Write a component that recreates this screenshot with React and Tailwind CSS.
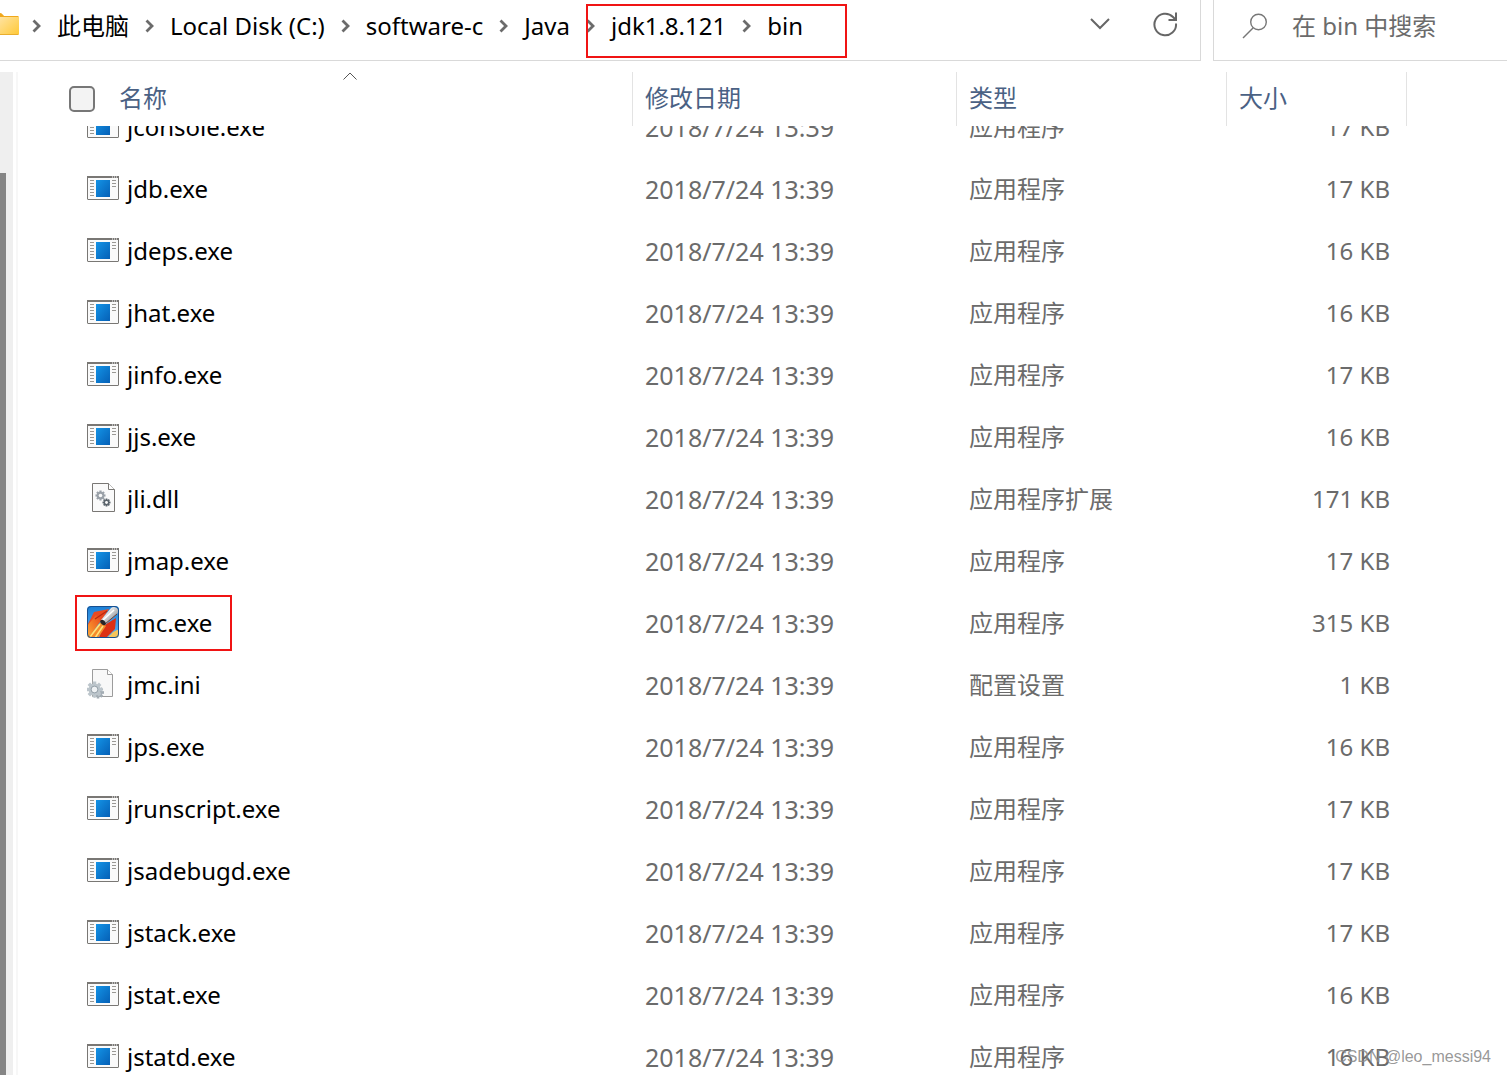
import { useEffect, useRef, useState } from "react";

const files = [
  { name: "jconsole.exe", kind: "exe", size: "17 KB" },
  { name: "jdb.exe", kind: "exe", size: "17 KB" },
  { name: "jdeps.exe", kind: "exe", size: "16 KB" },
  { name: "jhat.exe", kind: "exe", size: "16 KB" },
  { name: "jinfo.exe", kind: "exe", size: "17 KB" },
  { name: "jjs.exe", kind: "exe", size: "16 KB" },
  { name: "jli.dll", kind: "dll", size: "171 KB" },
  { name: "jmap.exe", kind: "exe", size: "17 KB" },
  { name: "jmc.exe", kind: "jmc", size: "315 KB", marked: true },
  { name: "jmc.ini", kind: "ini", size: "1 KB" },
  { name: "jps.exe", kind: "exe", size: "16 KB" },
  { name: "jrunscript.exe", kind: "exe", size: "17 KB" },
  { name: "jsadebugd.exe", kind: "exe", size: "17 KB" },
  { name: "jstack.exe", kind: "exe", size: "17 KB" },
  { name: "jstat.exe", kind: "exe", size: "16 KB" },
  { name: "jstatd.exe", kind: "exe", size: "16 KB" },
];

const kinds = {
  exe: { label: "应用程序", Icon: ExeIcon },
  jmc: { label: "应用程序", Icon: JmcIcon },
  dll: { label: "应用程序扩展", Icon: DllIcon },
  ini: { label: "配置设置", Icon: IniIcon },
};

const crumbs = ["此电脑", "Local Disk (C:)", "software-c", "Java"];
const markedCrumbs = ["jdk1.8.121", "bin"];

function ExeIcon() {
  return (
    <svg viewBox="0 0 32 32" className="mb-0.5 size-8 shrink-0" aria-hidden="true">
      <defs>
        <linearGradient id="exe-blue" x1="0" y1="0" x2="1" y2="1">
          <stop offset="0" stopColor="#1493e6" />
          <stop offset="1" stopColor="#0560b6" />
        </linearGradient>
      </defs>
      <rect x="0.5" y="4.5" width="31" height="23" rx="0.5" fill="#fafafa" stroke="#797774" />
      <rect x="0" y="4" width="32" height="2" fill="#797774" />
      <path d="M25 5h1M27 5h1M29 5h1" stroke="#fff" />
      <rect x="9" y="8" width="14" height="17" fill="url(#exe-blue)" />
      <path
        d="M3 8.5h4M3 11.5h4M3 14.5h4M3 17.5h4M3 20.5h4M3 23.5h4M25 8.5h4M25 11.5h4M25 14.5h4"
        stroke="#9a9894"
      />
    </svg>
  );
}

function Gear({ cx, cy, r, color, hole = "#fafafa" }) {
  return (
    <g transform={`translate(${cx} ${cy}) scale(${r})`}>
      {[0, 45, 90, 135].map((a) => (
        <rect
          key={a}
          x="-0.22"
          y="-1"
          width="0.44"
          height="2"
          fill={color}
          transform={`rotate(${a})`}
        />
      ))}
      <circle r="0.74" fill={color} />
      <circle r="0.36" fill={hole} />
    </g>
  );
}

function DllIcon() {
  return (
    <svg viewBox="0 0 32 32" className="mb-0.5 size-8 shrink-0" aria-hidden="true">
      <path d="M5.5 1.5h16l6 6v22h-22z" fill="#fafafa" stroke="#797774" />
      <path d="M21.5 1.5v6h6" fill="#fff" stroke="#797774" />
      <Gear cx={13.5} cy={13.5} r={5} color="#9aa1a8" />
      <Gear cx={19.5} cy={20.5} r={4} color="#5b646c" />
    </svg>
  );
}

function IniIcon() {
  return (
    <svg viewBox="0 0 32 32" className="mb-0.5 size-8 shrink-0" aria-hidden="true">
      <path d="M5.5 1.5h15l5 5v22h-20z" fill="#f8f8f8" stroke="#9c9c9c" />
      <path d="M20.5 1.5v5h5" fill="#fff" stroke="#9c9c9c" />
      <Gear cx={11} cy={24.5} r={6} color="#a3acb3" />
      <Gear cx={7.5} cy={21.5} r={8} color="#bcc5cb" hole="#eef1f3" />
      <circle cx="7.5" cy="21.5" r="3.4" fill="none" stroke="#98a3ab" />
    </svg>
  );
}

function JmcIcon() {
  return (
    <svg viewBox="0 0 32 32" className="mb-0.5 size-8 shrink-0" aria-hidden="true">
      <defs>
        <clipPath id="jmc-clip">
          <rect width="32" height="32" rx="4" />
        </clipPath>
        <linearGradient id="jmc-sky" x1="0" y1="0" x2="0" y2="1">
          <stop offset="0" stopColor="#1b7fd6" />
          <stop offset="1" stopColor="#5db4f2" />
        </linearGradient>
        <linearGradient id="jmc-fire" x1="1" y1="0" x2="0" y2="1">
          <stop offset="0" stopColor="#e8451c" />
          <stop offset="0.6" stopColor="#f5852a" />
          <stop offset="1" stopColor="#fbb040" />
        </linearGradient>
        <linearGradient id="jmc-body" x1="0" y1="0" x2="1" y2="1">
          <stop offset="0.2" stopColor="#ffffff" />
          <stop offset="0.8" stopColor="#8d9094" />
        </linearGradient>
      </defs>
      <g clipPath="url(#jmc-clip)">
        <rect width="32" height="32" fill="url(#jmc-sky)" />
        <path d="M21 32c1-3 3-3 4-5 2-1 3-3 7-3v8z" fill="#f6c65b" />
        <path d="M0 20 7 6 22 3 14 15 0 29z" fill="#ea4a22" />
        <path d="M0 20 9 9l5 5L2 32H0z" fill="url(#jmc-fire)" />
        <path d="M16 20 29 12l-1 11-9 9h-7z" fill="#dc3014" />
        <path d="M14 16l5 4-8 12H1z" fill="#f68b2c" />
        <path d="M13 18 3 31M16 20 8 32" stroke="#ffe27a" strokeWidth="1.6" />
        <path d="M8 13 20 5" stroke="#b9280f" strokeWidth="1.2" />
        <path d="M14 14 24 2c2-2 6-1 7 1s0 4-1 5L18 19z" fill="url(#jmc-body)" />
        <path d="M16 14 27 4" stroke="#fff" strokeWidth="1.6" />
        <path d="M18 18 30 8" stroke="#6e3a32" strokeWidth="1" />
        <ellipse cx="16" cy="16.5" rx="2" ry="3.2" transform="rotate(-45 16 16.5)" fill="#2b2527" />
      </g>
      <rect x="0.5" y="0.5" width="31" height="31" rx="3.5" fill="none" stroke="#174f8f" />
    </svg>
  );
}

function FolderIcon() {
  return (
    <svg viewBox="0 0 20 24" className="mb-1 h-6 w-5 shrink-0" aria-hidden="true">
      <defs>
        <linearGradient id="folder-face" x1="0" y1="0" x2="1" y2="1">
          <stop offset="0" stopColor="#ffe3a0" />
          <stop offset="1" stopColor="#ffc937" />
        </linearGradient>
      </defs>
      <path d="M0 1c2 0 3 2 4 3h14.500V10H0z" fill="#f0a81c" />
      <path d="M0 5h19v16.500c0 .8-.3 1-1 1H0z" fill="url(#folder-face)" />
      <path d="M0 22.500h18.500" stroke="#e9ae2e" />
    </svg>
  );
}

function CrumbArrow() {
  return (
    <svg viewBox="0 0 9 14" className="h-3.5 w-[9px] shrink-0" fill="none" aria-hidden="true">
      <path d="M1.500 1.500 7 7l-5.500 5.500" stroke="#6b6b6b" strokeWidth="2.800" />
    </svg>
  );
}

function Crumb({ label }) {
  return (
    <li className="flex items-center gap-4">
      <CrumbArrow />
      <a href="#" className="whitespace-nowrap">
        {label}
      </a>
    </li>
  );
}

function AddressBar() {
  return (
    <div className="flex h-[61px] shrink-0 gap-3">
      <nav
        aria-label="路径"
        className="flex min-w-0 flex-1 items-center border-r border-b border-[#d9d9d9] pb-2"
      >
        <FolderIcon />
        <ol className="ml-3 flex items-center gap-4 text-black">
          {crumbs.map((c) => (
            <Crumb key={c} label={c} />
          ))}
          <li className="relative">
            <ol className="flex items-center gap-4">
              {markedCrumbs.map((c) => (
                <Crumb key={c} label={c} />
              ))}
            </ol>
            <span className="pointer-events-none absolute -top-1.5 -right-11 -bottom-4 left-0 border-2 border-[#f01414]" />
          </li>
        </ol>
        <button type="button" aria-label="历史记录" className="mb-1 ml-auto p-2">
          <svg viewBox="0 0 20 12" className="h-3 w-5" fill="none" aria-hidden="true">
            <path d="m1 1 9 9 9-9" stroke="#666" strokeWidth="2" />
          </svg>
        </button>
        <button type="button" aria-label="刷新" className="mr-5 mb-1 ml-8 p-0.5">
          <svg viewBox="0 0 26 26" className="size-[26px]" fill="none" aria-hidden="true">
            <path
              d="M24 12.500a10.800 10.800 0 1 1-3-6.500l3 3M24 1.500V9h-7.500"
              stroke="#666"
              strokeWidth="2"
            />
          </svg>
        </button>
      </nav>
      <label className="flex w-[294px] items-center gap-6 border-b border-l border-[#d9d9d9] pb-2 pl-7">
        <svg viewBox="0 0 26 26" className="size-[26px] shrink-0" fill="none" aria-hidden="true">
          <circle cx="16.500" cy="9" r="7.800" stroke="#777" strokeWidth="1.400" />
          <path d="M11 15 1 25" stroke="#777" strokeWidth="1.400" />
        </svg>
        <input
          type="search"
          aria-label="搜索"
          placeholder="在 bin 中搜索"
          className="w-full min-w-0 outline-none placeholder:text-[#6b6b6b]"
        />
      </label>
    </div>
  );
}

function HeaderCell({ children }) {
  return (
    <th className="sticky top-0 z-10 h-[54px] border-l border-[#e3e3e3] bg-white pb-0.5 pl-3 text-left font-normal">
      {children}
    </th>
  );
}

export default function App() {
  const listRef = useRef(null);
  const [allChecked, setAllChecked] = useState(false);

  useEffect(() => {
    listRef.current.scrollTop = 30;
  }, []);

  return (
    <div className="relative flex h-screen flex-col overflow-hidden bg-white font-['Noto_Sans','Noto_Sans_CJK_SC',sans-serif] text-2xl text-[#6b6b6b]">
      <AddressBar />

      <div className="mt-[11px] flex min-h-0 flex-1">
        {/* navigation pane edge */}
        <div className="w-[13px] shrink-0 bg-[#efefef] pt-[101px]">
          <div className="h-full w-1.5 bg-[#858585]" />
        </div>
        <div className="ml-[3px] w-0.5 shrink-0 bg-[#f7f7f7]" />

        <div
          ref={listRef}
          className="min-w-0 flex-1 overflow-auto pl-[50px] [scrollbar-width:none]"
        >
          <table className="w-full table-fixed border-separate border-spacing-0">
            <colgroup>
              <col className="w-[564px]" />
              <col className="w-[324px]" />
              <col className="w-[270px]" />
              <col className="w-[180px]" />
              <col />
            </colgroup>
            <thead className="text-[#4a6184]">
              <tr>
                <th className="sticky top-0 z-10 h-[54px] bg-white pb-0.5 text-left font-normal">
                  <svg
                    viewBox="0 0 14 8"
                    className="absolute top-0 left-1/2 h-2 w-3.5 -translate-x-1/2"
                    fill="none"
                    aria-hidden="true"
                  >
                    <path d="m.5 7.500 6.500-6.500 6.500 6.500" stroke="#555" />
                  </svg>
                  <div className="flex items-center gap-6">
                    <input
                      type="checkbox"
                      aria-label="全选"
                      checked={allChecked}
                      onChange={(e) => setAllChecked(e.target.checked)}
                      className="mt-0.5 ml-px size-[26px] appearance-none rounded-[5px] border-2 border-[#777] bg-[#f3f3f3] checked:bg-[#0067c0]"
                    />
                    名称
                  </div>
                </th>
                <HeaderCell>修改日期</HeaderCell>
                <HeaderCell>类型</HeaderCell>
                <HeaderCell>大小</HeaderCell>
                <HeaderCell />
              </tr>
            </thead>
            <tbody>
              {files.map((f) => {
                const { label, Icon } = kinds[f.kind];
                return (
                  <tr key={f.name} className="h-[62px]">
                    <td className="p-0 pl-[19px]">
                      <div className="relative flex w-fit items-center gap-2 text-black">
                        <Icon />
                        {f.name}
                        {f.marked && (
                          <span className="pointer-events-none absolute -inset-y-[11px] -right-5 -left-3 border-2 border-[#f01414]" />
                        )}
                      </div>
                    </td>
                    <td className="p-0 pl-[13px] text-[25px]/8">2018/7/24 13:39</td>
                    <td className="p-0 pl-[13px]">{label}</td>
                    <td className="p-0 pr-4 text-right">{f.size}</td>
                    <td />
                  </tr>
                );
              })}
            </tbody>
          </table>
        </div>
      </div>

      <p className="pointer-events-none absolute right-4 bottom-1.5 font-['Liberation_Sans',sans-serif] text-base text-[#8c8c8c]/90">
        CSDN @leo_messi94
      </p>
    </div>
  );
}
